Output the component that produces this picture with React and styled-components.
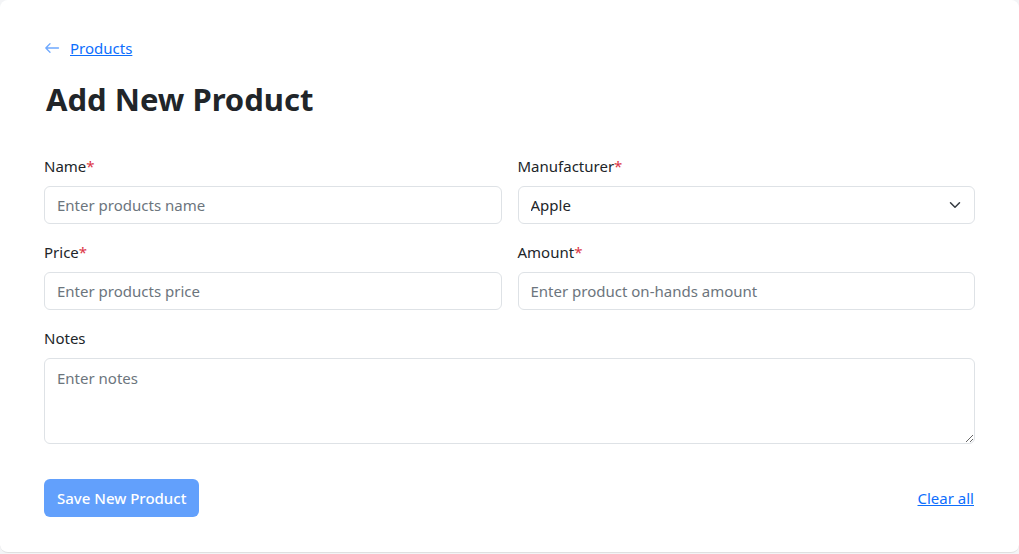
import React, { useState } from 'react';
import styled, { createGlobalStyle } from 'styled-components';

const GlobalStyle = createGlobalStyle`
  html, body {
    margin: 0;
    padding: 0;
    background: #f3f4f6;
    font-family: "Noto Sans", "Open Sans", sans-serif;
    color: #212529;
  }
  * { box-sizing: border-box; }
`;

const Card = styled.div`
  background: #fff;
  height: 553px;
  border-radius: 8px;
  border-bottom: 1px solid #e0e0e0;
  padding: 36px 44px 0 44px;
  display: flex;
  flex-direction: column;
`;

const BackLink = styled.a`
  display: flex;
  align-items: center;
  gap: 10px;
  font-size: 15px;
  color: #0d6efd;
  text-decoration: underline;
  cursor: pointer;
  height: 24px;

  svg { color: #6ea8fe; }
`;

const Title = styled.h1`
  margin: 17px 0 0 2px;
  font-size: 31px;
  font-weight: 700;
  line-height: 44px;
  color: #212529;
`;

const Form = styled.form`
  margin-top: 35px;
  display: grid;
  grid-template-columns: 1fr 1fr;
  column-gap: 16px;
  row-gap: 18px;
`;

const Field = styled.div`
  display: flex;
  flex-direction: column;
  gap: 10px;
  grid-column: ${p => (p.$wide ? '1 / -1' : 'auto')};
`;

const Label = styled.label`
  font-size: 15px;
  line-height: 20px;
  color: #212529;

  span { color: #dc3545; }
`;

const inputBase = `
  width: 100%;
  border: 1px solid #dee2e6;
  border-radius: 6px;
  background: #fff;
  font-family: "Noto Sans", "Open Sans", sans-serif;
  font-size: 15px;
  color: #212529;
  padding: 0 12px;
  outline: none;
  &::placeholder { color: #6c757d; }
`;

const Input = styled.input`
  ${inputBase}
  height: 38px;
`;

const SelectWrap = styled.div`
  position: relative;

  svg {
    position: absolute;
    right: 14px;
    top: 13px;
    pointer-events: none;
  }
`;

const Select = styled.select`
  ${inputBase}
  height: 38px;
  appearance: none;
`;

const TextArea = styled.textarea`
  ${inputBase}
  height: 86px;
  padding: 9px 12px;
  resize: vertical;
  display: block;
`;

const Footer = styled.div`
  margin-top: 35px;
  display: flex;
  justify-content: space-between;
  align-items: center;
`;

const SaveButton = styled.button`
  height: 38px;
  padding: 0 13px;
  border: none;
  border-radius: 6px;
  background: #62a0fc;
  color: #fff;
  font-family: "Noto Sans", "Open Sans", sans-serif;
  font-size: 15px;
  font-weight: 500;
  cursor: default;
`;

const ClearLink = styled.a`
  font-size: 15px;
  color: #0d6efd;
  text-decoration: underline;
  cursor: pointer;
  margin-right: 1px;
`;

export default function App() {
  const [form, setForm] = useState({ name: '', manufacturer: 'Apple', price: '', amount: '', notes: '' });
  const set = (k) => (e) => setForm(f => ({ ...f, [k]: e.target.value }));

  return (
    <>
      <GlobalStyle />
      <Card>
        <BackLink>
          <svg width="16" height="16" viewBox="0 0 16 16" fill="none" stroke="currentColor" strokeWidth="1.3" strokeLinecap="round" strokeLinejoin="round">
            <path d="M14.5 8H1.8M6 3.8L1.8 8L6 12.2" />
          </svg>
          Products
        </BackLink>
        <Title>Add New Product</Title>
        <Form onSubmit={e => e.preventDefault()}>
          <Field>
            <Label>Name<span>*</span></Label>
            <Input placeholder="Enter products name" value={form.name} onChange={set('name')} />
          </Field>
          <Field>
            <Label>Manufacturer<span>*</span></Label>
            <SelectWrap>
              <Select value={form.manufacturer} onChange={set('manufacturer')}>
                <option>Apple</option>
                <option>Samsung</option>
              </Select>
              <svg width="12" height="12" viewBox="0 0 16 16" fill="none" stroke="#343a40" strokeWidth="2" strokeLinecap="round" strokeLinejoin="round">
                <path d="M2 5l6 6 6-6" />
              </svg>
            </SelectWrap>
          </Field>
          <Field>
            <Label>Price<span>*</span></Label>
            <Input placeholder="Enter products price" value={form.price} onChange={set('price')} />
          </Field>
          <Field>
            <Label>Amount<span>*</span></Label>
            <Input placeholder="Enter product on-hands amount" value={form.amount} onChange={set('amount')} />
          </Field>
          <Field $wide>
            <Label>Notes</Label>
            <TextArea placeholder="Enter notes" value={form.notes} onChange={set('notes')} />
          </Field>
        </Form>
        <Footer>
          <SaveButton type="button">Save New Product</SaveButton>
          <ClearLink>Clear all</ClearLink>
        </Footer>
      </Card>
    </>
  );
}
